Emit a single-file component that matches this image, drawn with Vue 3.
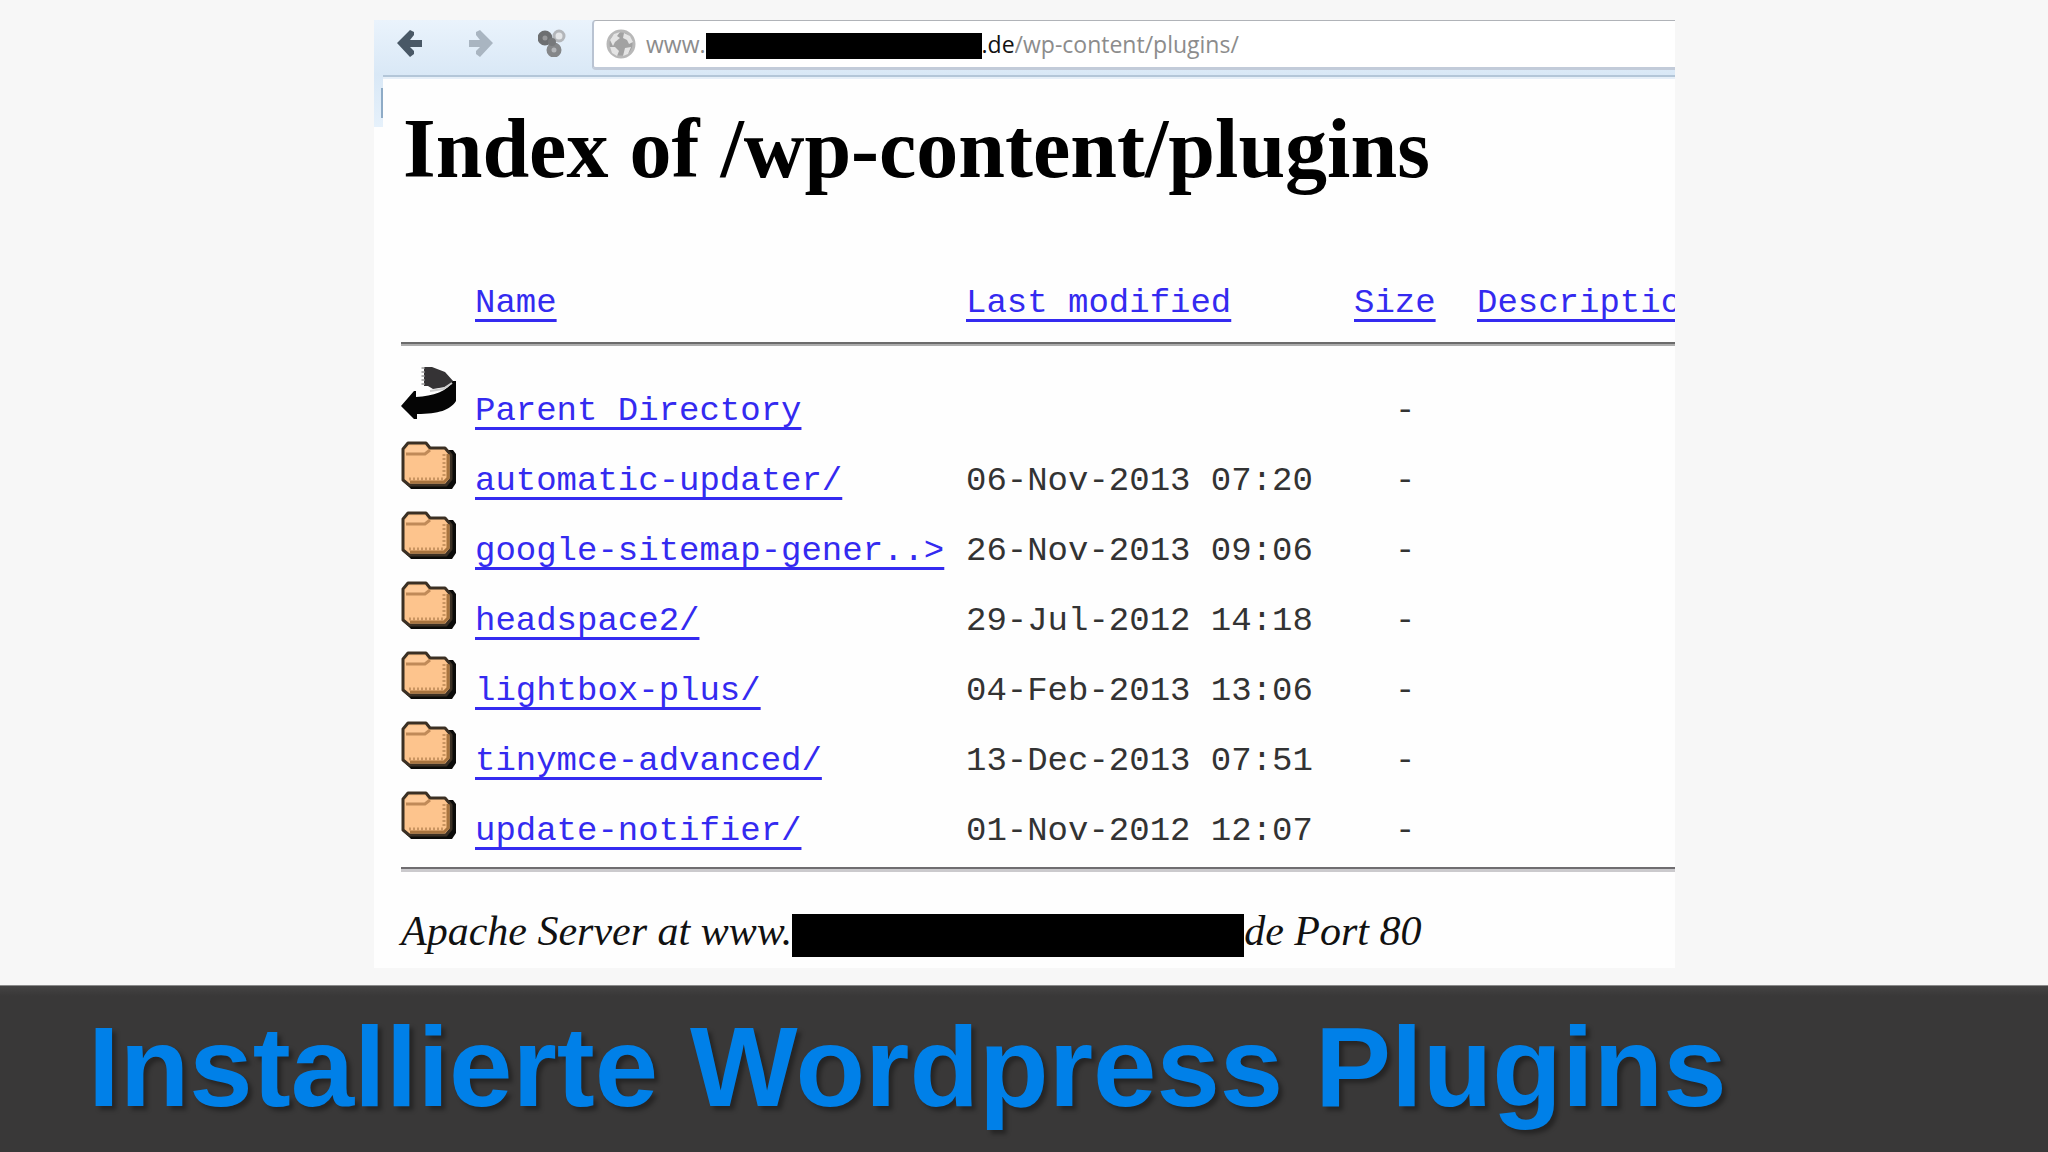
<template>
    <div class="slide">
        <main class="capture">
            <!-- Browser toolbar -->
            <header class="toolbar">
                <div class="nav-buttons">
                    <button type="button" class="nav-btn" aria-label="Back">
                        <svg viewBox="0 0 28 28"><path d="M14 1 L18 3 L18 6 L14 11 H26 V18 H14 L18 22 V25 L14 28 L1 14 Z" fill="#495866" /></svg>
                    </button>
                    <button type="button" class="nav-btn" aria-label="Forward">
                        <svg viewBox="0 0 28 28"><path d="M13 1 L9 3 V6 L13 11 H2 V18 H13 L9 22 V25 L13 28 L26 14 Z" fill="#a9b5c1" /></svg>
                    </button>
                    <button type="button" class="nav-btn" aria-label="Add-on">
                        <svg viewBox="0 0 28 28">
                            <circle cx="21" cy="7" r="5" fill="#e4e6e8" stroke="#b3b6ba" stroke-width="3" />
                            <circle cx="16" cy="21" r="5" fill="#b4b6b9" stroke="#858789" stroke-width="5" />
                            <circle cx="7" cy="9" r="5" fill="#98999b" stroke="#6d6f71" stroke-width="5" />
                            <circle cx="14" cy="13" r="4" fill="#77797b" />
                        </svg>
                    </button>
                </div>
                <div class="address-bar">
                    <svg class="globe" viewBox="0 0 30 30">
                        <circle cx="15" cy="15" r="13" fill="#a2a2a2" stroke="#b8b8b8" stroke-width="3" />
                        <path d="M4 11 L8 5 L14 3 L11 7 L14 9 L9 13 L7 17 Z M18 4 L24 7 L27 13 L23 15 L21 11 L17 9 Z M4 18 L9 18 L13 22 L11 27 L6 24 Z M19 19 L25 18 L22 25 L17 27 Z" fill="#e4e4e4" />
                    </svg>
                    <span class="url-dim">www.</span>
                    <span class="redacted redacted-url"></span>
                    <span class="url-host">.de</span>
                    <input v-model="path" class="url-path" type="text" aria-label="Address" />
                </div>
            </header>

            <!-- Directory listing -->
            <section class="listing">
                <h1>Index of /wp-content/plugins</h1>

                <table>
                    <colgroup>
                        <col class="col-icon" />
                        <col class="col-name" />
                        <col class="col-date" />
                        <col class="col-size" />
                        <col />
                    </colgroup>
                    <thead>
                        <tr>
                            <th></th>
                            <th v-for="title in columns" :key="title"><a href="#">{{ title }}</a></th>
                        </tr>
                    </thead>
                    <tbody>
                        <tr v-for="entry in entries" :key="entry.name">
                            <td>
                                <svg v-if="entry.parent" class="icon" viewBox="0 0 55 55">
                                    <path d="M23 2 L31 2 L44 7 L53 17 L44 22 L32 24 L27 21 H23 Z" fill="#353335" />
                                    <path d="M22 2 V22" stroke="#b0b0b0" stroke-width="3" stroke-dasharray="2 2" />
                                    <path d="M52 16 H55 V36 C49 45 38 49 16 49 V54 H13 L0 41 L13 26 H15 V32 C32 31 47 26 52 16 Z" fill="#050505" />
                                    <path d="M29 26 L42 24 L51 18" fill="none" stroke="#ccc" stroke-width="2" />
                                </svg>
                                <svg v-else class="icon" viewBox="0 0 55 55">
                                    <path d="M47 15 H52 L55 19 V48 L51 54 H10 L5 49 Z" fill="#0c0c0a" />
                                    <path d="M2 14 L7 8 H25 L29 13 H44 L50 20 V44 L45 50 H8 L2 45 Z" fill="#fdc48d" stroke="#3b3024" stroke-width="3" stroke-linejoin="round" />
                                    <path d="M4 16 L8 11 H24 L27 15 L24 18 H6 Z" fill="#ffcb99" />
                                    <path d="M5 19 H24 L29 15" fill="none" stroke="#c08a58" stroke-width="3" />
                                    <path d="M47 19 V43 L43 47 H9" fill="none" stroke="#a8743f" stroke-width="3" />
                                    <path d="M43 19 V43" stroke="#c99461" stroke-width="3" stroke-dasharray="2 2" />
                                    <path d="M8 44 H42" stroke="#c99461" stroke-width="3" stroke-dasharray="2 2" />
                                </svg>
                            </td>
                            <td><a href="#">{{ entry.name }}</a></td>
                            <td>{{ entry.modified }}</td>
                            <td class="size">-</td>
                            <td></td>
                        </tr>
                    </tbody>
                </table>

                <hr />

                <address>
                    <span>Apache Server at www.</span>
                    <span class="redacted redacted-host"></span>
                    <span>de Port 80</span>
                </address>
            </section>
        </main>

        <footer class="banner">
            <h2>Installierte Wordpress Plugins</h2>
        </footer>
    </div>
</template>

<script setup>
    import { ref } from 'vue'

    const path = ref('/wp-content/plugins/')

    const columns = ['Name', 'Last modified', 'Size', 'Description']

    const entries = [
        { name: 'Parent Directory', modified: '', parent: true },
        { name: 'automatic-updater/', modified: '06-Nov-2013 07:20' },
        { name: 'google-sitemap-gener..>', modified: '26-Nov-2013 09:06' },
        { name: 'headspace2/', modified: '29-Jul-2012 14:18' },
        { name: 'lightbox-plus/', modified: '04-Feb-2013 13:06' },
        { name: 'tinymce-advanced/', modified: '13-Dec-2013 07:51' },
        { name: 'update-notifier/', modified: '01-Nov-2012 12:07' }
    ]
</script>

<style>
    body {
    margin: 0;
    background: #f7f7f7;
    }
</style>

<style scoped>
    .slide {
    display: flex;
    flex-direction: column;
    min-height: 100vh;
    }

    .capture {
    position: relative;
    margin: 20px 373px 17px 374px;
    background: #fefefe;
    overflow: hidden;
    }

    /* Window frame down the left side of the page */
    .capture::before {
    content: "";
    position: absolute;
    left: 0;
    top: 55px;
    width: 9px;
    height: 52px;
    background: linear-gradient(#d9e8f6, #e6f1fb);
    }

    .capture::after {
    content: "";
    position: absolute;
    left: 7px;
    top: 68px;
    width: 2px;
    height: 30px;
    background: #8eabc6;
    }

    .toolbar {
    display: flex;
    align-items: flex-start;
    height: 55px;
    background: linear-gradient(#eaf3fc, #d9e8f6);
    border-bottom: 2px solid #b3c6d8;
    box-shadow: 0 2px #e6eff8;
    }

    .nav-buttons {
    display: flex;
    gap: 43px;
    padding: 9px 26px 0 22px;
    }

    .nav-btn {
    width: 28px;
    height: 28px;
    padding: 0;
    border: none;
    background: none;
    cursor: pointer;
    }

    .nav-btn svg {
    display: block;
    width: 28px;
    height: 28px;
    }

    .address-bar {
    flex: 1;
    display: flex;
    align-items: center;
    height: 46px;
    min-width: 0;
    padding-left: 12px;
    background: #fff;
    border-top: 1px solid #b0b3b8;
    border-left: 2px solid #b9c3d2;
    border-bottom: 3px solid #c2cbd9;
    border-radius: 4px 0 0 4px;
    font: 23px/30px "Open Sans", "Noto Sans", sans-serif;
    }

    .globe {
    width: 30px;
    height: 30px;
    margin-right: 10px;
    }

    .url-dim {
    color: #8c8c8c;
    }

    .url-host {
    color: #111;
    }

    .url-path {
    flex: 1;
    min-width: 0;
    padding: 0;
    border: none;
    outline: none;
    background: none;
    color: #8c8c8c;
    font: inherit;
    }

    .redacted {
    background: #000;
    }

    .redacted-url {
    width: 276px;
    height: 26px;
    margin-top: 4px;
    }

    .redacted-host {
    width: 452px;
    height: 43px;
    }

    .listing {
    padding: 24px 0 11px 27px;
    }

    h1 {
    margin: 0 0 86px 2px;
    font: bold 84px/96px "Liberation Serif", serif;
    color: #000;
    white-space: nowrap;
    }

    table {
    width: 100%;
    table-layout: fixed;
    border-collapse: separate;
    border-spacing: 0;
    font: 34px/40px "Liberation Mono", monospace;
    color: #333;
    }

    .col-icon {
    width: 74px;
    }

    .col-name {
    width: 491px;
    }

    .col-date {
    width: 388px;
    }

    .col-size {
    width: 123px;
    }

    th,
    td {
    padding: 0;
    text-align: left;
    vertical-align: baseline;
    font-weight: normal;
    white-space: nowrap;
    }

    th {
    padding-bottom: 19px;
    border-bottom: 2px solid #6b6b6b;
    }

    td {
    height: 70px;
    }

    tbody tr:first-child td {
    padding-top: 19px;
    border-top: 2px solid #adadad;
    }

    .size {
    padding-left: 41px;
    }

    .icon {
    width: 55px;
    height: 55px;
    }

    a {
    color: #342af0;
    text-decoration: underline;
    text-decoration-thickness: 3px;
    text-decoration-skip-ink: none;
    text-underline-offset: 7px;
    }

    hr {
    height: 0;
    margin: 12px 0 33px;
    border: none;
    border-top: 2px solid #6f6d70;
    border-bottom: 3px solid #cbcacd;
    }

    address {
    display: flex;
    align-items: flex-end;
    font: italic 42px/52px "Liberation Serif", serif;
    color: #111;
    white-space: nowrap;
    }

    .banner {
    flex: 1;
    padding: 17px 0 20px 88px;
    background: linear-gradient(#444343, #393838 10px);
    border-top: 1px solid #8a8a8a;
    }

    .banner h2 {
    margin: 0;
    font: bold 114px/128px "Liberation Sans", sans-serif;
    color: #0080e8;
    text-shadow: 4px 4px 4px rgba(0, 0, 0, 0.35);
    white-space: nowrap;
    }
</style>
